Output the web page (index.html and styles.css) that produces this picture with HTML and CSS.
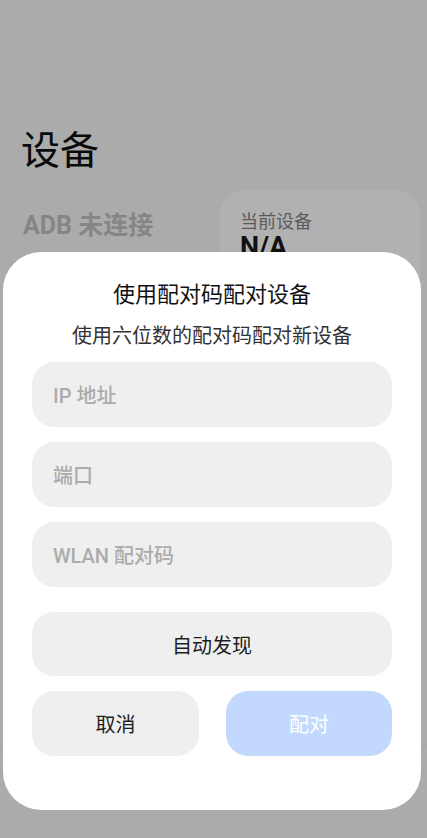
FILE: index.html
```html
<!DOCTYPE html>
<html lang="zh-CN">
<head>
<meta charset="utf-8">
<title>设备</title>
<link rel="stylesheet" href="styles.css">
</head>
<body>
<main class="page">
  <h1 class="page-title">设备</h1>
  <div class="status-row">
    <div class="adb-status">ADB 未连接</div>
    <div class="device-card">
      <div class="device-label">当前设备</div>
      <div class="device-value">N/A</div>
    </div>
  </div>
  <div class="nav-line"></div>
</main>

<div class="dialog">
  <h2 class="dialog-title">使用配对码配对设备</h2>
  <p class="dialog-sub">使用六位数的配对码配对新设备</p>
  <div class="fields">
    <div class="field">IP 地址</div>
    <div class="field">端口</div>
    <div class="field">WLAN 配对码</div>
  </div>
  <button class="btn btn-wide">自动发现</button>
  <div class="btn-row">
    <button class="btn">取消</button>
    <button class="btn btn-primary">配对</button>
  </div>
</div>
</body>
</html>
```
FILE: styles.css
```css
* { box-sizing: border-box; }
html, body {
  margin: 0;
  padding: 0;
  width: 427px;
  height: 838px;
  overflow: hidden;
}
body {
  background: #ababab;
  font-family: Roboto, "Noto Sans CJK SC", sans-serif;
  color: #111;
}
.page {
  padding: 121px 7px 0 21px;
  height: 838px;
  position: relative;
}
.page-title {
  margin: 0;
  font-family: "Noto Sans CJK SC", sans-serif;
  font-weight: 400;
  font-size: 39px;
  line-height: 52px;
  color: #0a0a0a;
}
.status-row {
  display: flex;
  justify-content: space-between;
  align-items: flex-start;
  margin-top: 17px;
}
.adb-status {
  margin-top: 20px;
  padding-left: 2px;
  font-size: 25px;
  line-height: 32px;
  font-weight: 700;
  color: #858585;
}
.device-card {
  width: 200px;
  height: 120px;
  background: #b1b1b1;
  border-radius: 24px;
  padding: 17px 20px;
}
.device-label {
  font-family: "Noto Sans CJK SC", sans-serif;
  font-size: 18px;
  line-height: 26px;
  color: #5b5b5b;
}
.device-value {
  font-size: 27px;
  line-height: 28px;
  font-weight: 700;
  color: #111;
}
.nav-line {
  position: absolute;
  left: 0;
  right: 0;
  top: 745px;
  height: 1px;
  background: #a2a2a2;
}

.dialog {
  position: absolute;
  left: 3px;
  top: 252px;
  width: 418px;
  height: 558px;
  background: #fff;
  border-radius: 38px;
  padding: 24px 29px 0 29px;
  text-align: center;
}
.dialog-title {
  margin: 0;
  font-family: "Noto Sans CJK SC", sans-serif;
  font-weight: 400;
  font-size: 22px;
  line-height: 32px;
  color: #111;
}
.dialog-sub {
  margin: 12px 0 0;
  font-family: "Noto Sans CJK SC", sans-serif;
  font-size: 20px;
  line-height: 30px;
  color: #333;
}
.fields {
  margin-top: 12px;
  display: flex;
  flex-direction: column;
  gap: 15px;
}
.field {
  height: 65px;
  border-radius: 22px;
  background: #efefef;
  padding-left: 21px;
  display: flex;
  align-items: center;
  font-size: 20px;
  font-weight: 500;
  color: #ababab;
  text-align: left;
}
.btn {
  border: none;
  margin: 0;
  font-family: "Noto Sans CJK SC", sans-serif;
  font-size: 20px;
  color: #1e1e1e;
  background: #efefef;
  border-radius: 22px;
  height: 65px;
  width: 100%;
  display: flex;
  align-items: center;
  justify-content: center;
}
.btn-wide {
  margin-top: 25px;
  height: 64px;
}
.btn-row {
  margin-top: 15px;
  display: grid;
  grid-template-columns: 167px 166px;
  justify-content: space-between;
}
.btn-primary {
  background: #c2d9fd;
  color: #fff;
}
```
